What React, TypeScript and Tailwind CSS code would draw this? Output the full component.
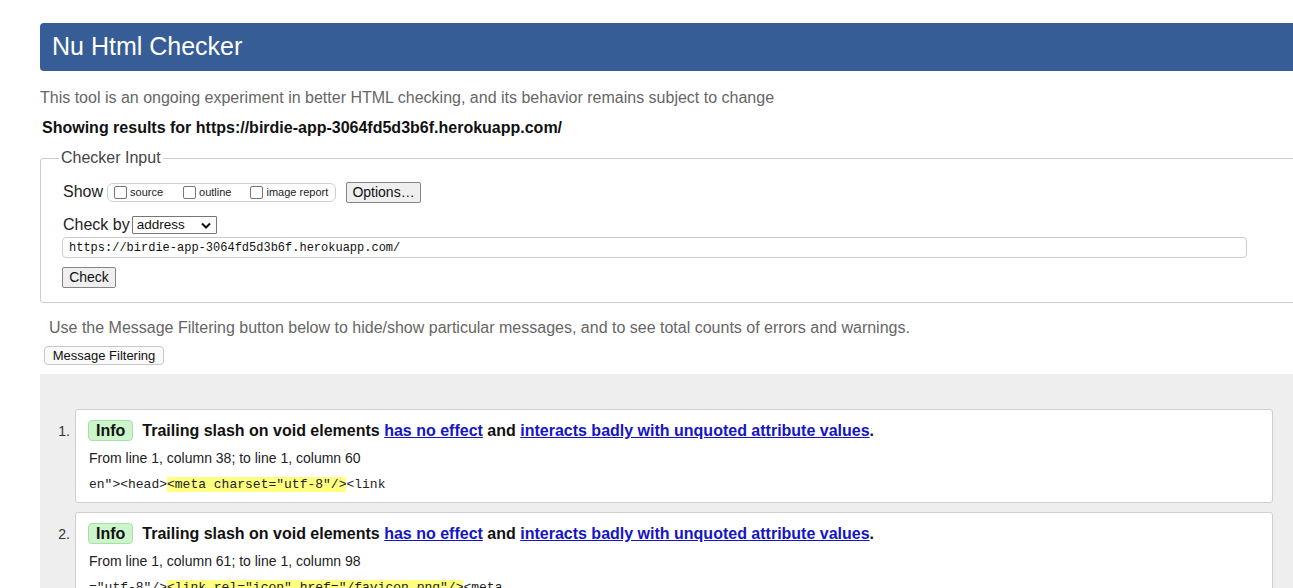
const sans = "font-['Liberation_Sans',Arial,sans-serif]";
const mono = "font-['Liberation_Mono','DejaVu_Sans_Mono',monospace]";

const Checkbox = ({ label }: { label: string }) => (
  <span className="flex items-center">
    <span className="inline-block h-[13px] w-[13px] rounded-[2px] border border-[#767676] bg-white" />
    <span className="ml-[3px] text-[11px] leading-[13px] text-[#222]">{label}</span>
  </span>
);

type Msg = {
  n: number;
  from: string;
  before: string;
  hl: string;
  after: string;
};

const messages: Msg[] = [
  {
    n: 1,
    from: 'From line 1, column 38; to line 1, column 60',
    before: 'en"><head>',
    hl: '<meta charset="utf-8"/>',
    after: '<link',
  },
  {
    n: 2,
    from: 'From line 1, column 61; to line 1, column 98',
    before: '="utf-8"/>',
    hl: '<link rel="icon" href="/favicon.png"/>',
    after: '<meta',
  },
];

const MessageCard = ({ m }: { m: Msg }) => (
  <li className="flex">
    <div className="w-[35px] shrink-0 pr-[5px] pt-[13px] text-right text-[14px] leading-[18px] text-[#333]">
      {m.n}.
    </div>
    <div className="w-[1198px] rounded-[3px] border border-[#cfcfcf] bg-white px-[12px] pb-[8px] pt-[10px]">
      <div className="flex items-center">
        <span className="flex h-[21px] items-center rounded-[4px] border border-[#a9dfa9] bg-[#ccf5cc] px-[7px] text-[16px] font-bold text-[#111]">
          Info
        </span>
        <span className="ml-[9px] text-[16px] font-bold leading-[21px] text-[#111]">
          Trailing slash on void elements{' '}
          <a className="text-[#1414c8] underline">has no effect</a> and{' '}
          <a className="text-[#1414c8] underline">interacts badly with unquoted attribute values</a>.
        </span>
      </div>
      <div className="ml-[1px] mt-[8px] text-[14px] leading-[18px] text-[#222]">{m.from}</div>
      <div className={`ml-[1px] mt-[9px] whitespace-pre text-[13px] leading-[18px] text-[#222] ${mono}`}>
        {m.before}
        <span className="bg-[#ffff80]">{m.hl}</span>
        {m.after}
      </div>
    </div>
  </li>
);

export default function App() {
  return (
    <div className={`h-[588px] w-[1293px] overflow-hidden bg-white ${sans}`}>
      <div className="w-[1320px] pl-[40px] pt-[23px]">
        <h1 className="flex h-[48px] items-center rounded-[4px] bg-[#365d95] pl-[12px] text-[25px] font-normal text-white">
          Nu Html Checker
        </h1>

        <p className="mt-[17px] text-[16px] leading-[20px] text-[#666]">
          This tool is an ongoing experiment in better HTML checking, and its behavior remains subject to change
        </p>
        <p className="ml-[2px] mt-[10px] text-[16px] font-bold leading-[20px] text-[#111]">
          Showing results for https://birdie-app-3064fd5d3b6f.herokuapp.com/
        </p>

        <fieldset className="mt-[10px] rounded-[3px] border border-[#cccccc] pb-[14px] pl-[22px]">
          <legend className="ml-[-4px] px-[2px] text-[16px] leading-[20px] text-[#444]">Checker Input</legend>

          <div className="mt-[13px] flex h-[22px] items-center">
            <span className="text-[16px] text-[#222]">Show</span>
            <div className="ml-[4px] flex h-[19px] w-[229px] items-center rounded-[6px] border border-[#d0d0d0] pl-[6px]">
              <Checkbox label="source" />
              <span className="w-[20px]" />
              <Checkbox label="outline" />
              <span className="w-[19px]" />
              <Checkbox label="image report" />
            </div>
            <button className="ml-[10px] flex h-[21px] w-[75px] items-center justify-center rounded-[2px] border border-[#858585] bg-[#efefef] text-[14px] text-[#111]">
              Options…
            </button>
          </div>

          <div className="mt-[11px] flex h-[22px] items-center">
            <span className="text-[16px] text-[#222]">Check by</span>
            <div className="ml-[2px] flex h-[18px] w-[85px] items-center justify-between rounded-[1px] border border-[#767676] bg-white pl-[4px] pr-[5px] text-[13.5px] text-[#111]">
              <span>address</span>
              <svg width="10" height="7" viewBox="0 0 10 7">
                <path d="M1 1.5 L5 5.5 L9 1.5" fill="none" stroke="#111" strokeWidth="2" />
              </svg>
            </div>
          </div>

          <div
            className={`-ml-[1px] mt-[1px] flex h-[21px] w-[1185px] items-center rounded-[4px] border border-[#cccccc] pl-[6px] text-[12px] text-[#111] ${mono}`}
          >
            https://birdie-app-3064fd5d3b6f.herokuapp.com/
          </div>

          <button className="-ml-[1px] mt-[9px] flex h-[21px] w-[54px] items-center justify-center rounded-[2px] border border-[#858585] bg-[#efefef] text-[14px] text-[#111]">
            Check
          </button>
        </fieldset>

        <p className="ml-[9px] mt-[15px] text-[16px] leading-[20px] text-[#666]">
          Use the Message Filtering button below to hide/show particular messages, and to see total counts of errors and warnings.
        </p>
        <button className="ml-[4px] mt-[8px] flex h-[19px] w-[120px] items-center justify-center rounded-[4px] border border-[#c8c8c8] bg-[#fafafa] text-[13px] text-[#111]">
          Message Filtering
        </button>

        <div className="mt-[9px] h-[300px] bg-[#eeeeee] pt-[35px]">
          <ol className="flex flex-col gap-[9px]">
            {messages.map((m) => (
              <MessageCard key={m.n} m={m} />
            ))}
          </ol>
        </div>
      </div>
    </div>
  );
}
